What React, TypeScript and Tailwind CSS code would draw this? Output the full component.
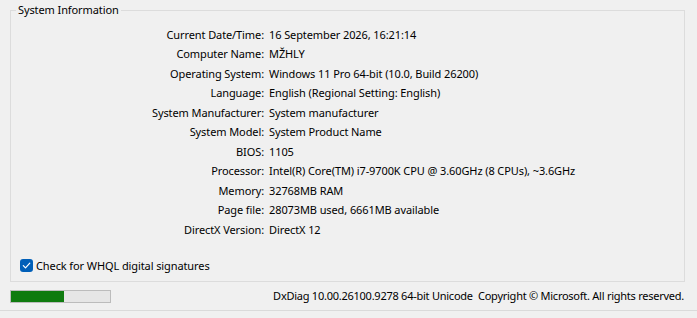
import React from 'react';

const rows: [string, string][] = [
  ['Current Date/Time:', '16 September 2026, 16:21:14'],
  ['Computer Name:', 'MŽHLY'],
  ['Operating System:', 'Windows 11 Pro 64-bit (10.0, Build 26200)'],
  ['Language:', 'English (Regional Setting: English)'],
  ['System Manufacturer:', 'System manufacturer'],
  ['System Model:', 'System Product Name'],
  ['BIOS:', '1105'],
  ['Processor:', 'Intel(R) Core(TM) i7-9700K CPU @ 3.60GHz (8 CPUs), ~3.6GHz'],
  ['Memory:', '32768MB RAM'],
  ['Page file:', '28073MB used, 6661MB available'],
  ['DirectX Version:', 'DirectX 12'],
];

const CheckBox = () => (
  <span className="w-[13px] h-[13px] rounded-[3px] bg-[#005fb8] flex items-center justify-center">
    <svg width="9" height="9" viewBox="0 0 9 9" fill="none">
      <path d="M1.3 4.6 L3.5 6.8 L7.8 2.2" stroke="#fff" strokeWidth="1.2" strokeLinecap="round" strokeLinejoin="round" />
    </svg>
  </span>
);

export default function App() {
  return (
    <div
      className="w-[697px] h-[318px] bg-[#f0f0f0] text-[11px] tracking-[-0.1px] text-black overflow-hidden flex flex-col"
      style={{ fontFamily: '"Segoe UI", "Noto Sans", sans-serif' }}
    >
      <fieldset className="ml-[10px] mt-[2px] w-[675px] h-[280px] border border-[#dcdcdc] px-0">
        <legend className="ml-[5px] px-[2px] leading-[16px]">System Information</legend>
        <div className="pt-[7px] flex flex-col">
          {rows.map(([label, value]) => (
            <div key={label} className="flex h-[19.5px] items-center">
              <div className="w-[253px] text-right whitespace-nowrap">{label}</div>
              <div className="ml-[5px] whitespace-nowrap">{value}</div>
            </div>
          ))}
        </div>
        <div className="mt-[18px] ml-[9px] flex items-center gap-[3px]">
          <CheckBox />
          <span>Check for WHQL digital signatures</span>
        </div>
      </fieldset>
      <div className="flex items-center h-[28px] pl-[10px] pr-[13px]">
        <div className="w-[101px] h-[13px] border border-[#bcbcbc] bg-[#e6e6e6]">
          <div className="h-full w-[53px] bg-[#0f7b0f]" />
        </div>
        <div className="ml-auto whitespace-nowrap tracking-[-0.25px]">
          DxDiag 10.00.26100.9278 64-bit Unicode&nbsp; Copyright © Microsoft. All rights reserved.
        </div>
      </div>
      <div className="border-t border-[#dadada]" />
    </div>
  );
}
